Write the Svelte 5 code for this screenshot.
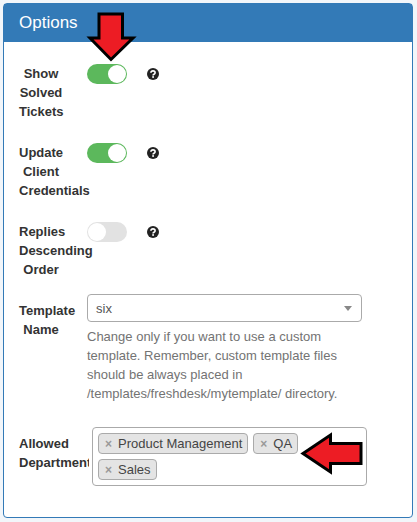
<script>
  const departments = ["Product Management", "QA", "Sales"];
  const toggles = [
    { label: "Show Solved Tickets", on: true },
    { label: "Update Client Credentials", on: true },
    { label: "Replies Descending Order", on: false },
  ];
</script>

<div class="panel">
  <div class="panel-heading">Options</div>
  <div class="panel-body">
    {#each toggles as t}
      <div class="row">
        <div class="label">{t.label}</div>
        <div class="control toggle-line">
          <span class="switch" class:on={t.on}><span class="knob"></span></span>
          <svg class="help" viewBox="0 0 12 12" aria-hidden="true">
            <circle cx="6" cy="6" r="6" fill="#222" />
            <path d="M3.9 4.7C4 3.5 4.9 2.9 6 2.9c1.2 0 2.1.7 2.1 1.8 0 1.6-2 1.5-2 2.7" fill="none" stroke="#fff" stroke-width="1.6" />
            <rect x="5.2" y="8.2" width="1.8" height="1.6" fill="#fff" />
          </svg>
        </div>
      </div>
    {/each}

    <div class="row template">
      <div class="label">Template Name</div>
      <div class="control wide">
        <div class="select">
          <span>six</span>
          <span class="caret"></span>
        </div>
        <p class="hint">
          Change only if you want to use a custom template. Remember, custom template files should be always placed in /templates/freshdesk/mytemplate/ directory.
        </p>
      </div>
    </div>

    <div class="row">
      <div class="label">Allowed Department</div>
      <div class="multi-wrap">
        <div class="multi">
          {#each departments as d}
            <span class="chip"><span class="x">×</span>{d}</span>
          {/each}
        </div>
      </div>
    </div>
  </div>

  <svg class="arrow arrow-down" viewBox="0 0 52 54" aria-hidden="true">
    <path d="M13 3H36.5V27H47L25 48.5L4 27H13Z" fill="#ed1c24" stroke="#000" stroke-width="3" />
  </svg>
  <svg class="arrow arrow-left" viewBox="0 0 66 50" aria-hidden="true">
    <path d="M3 25.5L30.5 7V15.5H61V35.5H30.5V44Z" fill="#ed1c24" stroke="#000" stroke-width="3" />
  </svg>
</div>

<style>
  :global(body) {
    background: #f2f6fa;
    font-family: "Liberation Sans", Arial, sans-serif;
    color: #333;
  }

  .panel {
    position: relative;
    box-sizing: border-box;
    width: 410px;
    height: 515px;
    margin: 3px 0 0 3px;
    background: #fff;
    border: 1px solid #337ab7;
    border-radius: 4px;
  }

  .panel-heading {
    height: 38px;
    padding-left: 15px;
    background: #337ab7;
    color: #fff;
    font-size: 17px;
    line-height: 38px;
  }

  .panel-body {
    padding: 15px;
  }

  .row {
    display: flex;
    align-items: flex-start;
    margin-bottom: 15px;
  }

  .label {
    flex: none;
    width: 44px;
    padding-top: 7px;
    margin-right: 24px;
    font-size: 13px;
    font-weight: 700;
    line-height: 19px;
    text-align: center;
  }

  .control {
    padding-top: 7px;
  }

  .toggle-line {
    display: flex;
    align-items: flex-start;
  }

  .switch {
    display: block;
    box-sizing: border-box;
    width: 40px;
    height: 20px;
    padding: 1px;
    background: #e2e2e2;
    border-radius: 10px;
  }

  .switch.on {
    background: #5cb85c;
  }

  .knob {
    display: block;
    width: 18px;
    height: 18px;
    background: #fff;
    border-radius: 50%;
  }

  .switch.on .knob {
    margin-left: 20px;
  }

  .help {
    width: 12px;
    height: 12px;
    margin: 4px 0 0 20px;
  }

  .wide {
    padding-top: 0;
  }

  .select {
    box-sizing: border-box;
    display: flex;
    align-items: center;
    justify-content: space-between;
    width: 275px;
    height: 28px;
    padding: 0 9px 0 8px;
    border: 1px solid #aaa;
    border-radius: 4px;
    font-size: 13px;
    color: #555;
  }

  .caret {
    width: 0;
    height: 0;
    border-left: 4px solid transparent;
    border-right: 4px solid transparent;
    border-top: 5px solid #888;
  }

  .hint {
    width: 268px;
    margin: 5px 0 0;
    font-size: 13px;
    line-height: 19px;
    color: #737373;
  }

  .template {
    margin-bottom: 24px;
  }

  .multi-wrap {
    position: relative;
    margin-left: 2px;
    padding-left: 3px;
    background: #fff;
  }

  .multi {
    box-sizing: border-box;
    display: flex;
    flex-wrap: wrap;
    align-content: flex-start;
    gap: 5px;
    width: 275px;
    height: 59px;
    padding: 5px;
    border: 1px solid #aaa;
    border-radius: 4px;
  }

  .chip {
    box-sizing: border-box;
    height: 21px;
    padding: 0 5px 0 6px;
    background: #e4e4e4;
    border: 1px solid #aaa;
    border-radius: 4px;
    font-size: 13px;
    line-height: 19px;
    color: #444;
  }

  .x {
    display: inline-block;
    width: 13px;
    color: #999;
    font-weight: 700;
    font-size: 12px;
  }

  .arrow {
    position: absolute;
  }

  .arrow-down {
    left: 82px;
    top: 7px;
    width: 52px;
    height: 54px;
  }

  .arrow-left {
    left: 296px;
    top: 424px;
    width: 66px;
    height: 50px;
  }
</style>
